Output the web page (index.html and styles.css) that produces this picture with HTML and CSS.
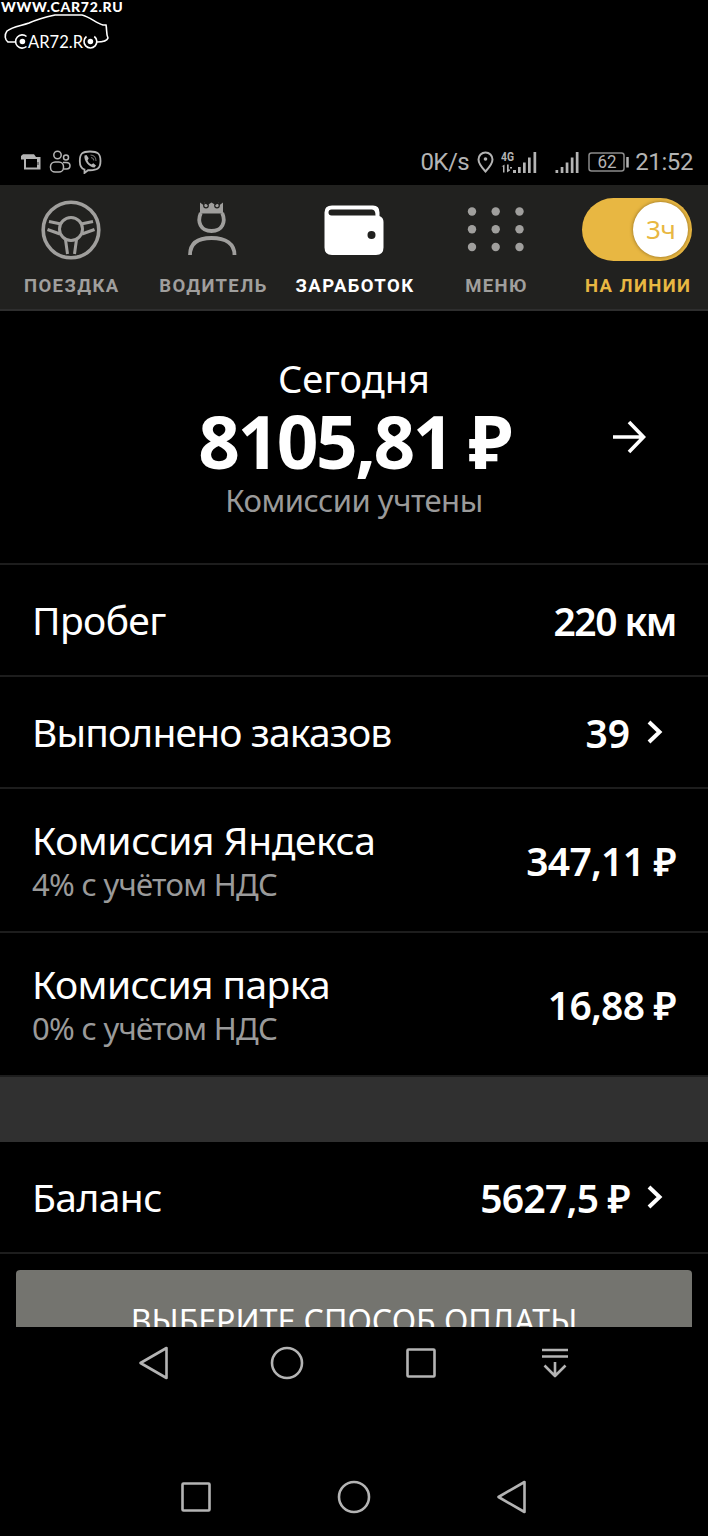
FILE: index.html
```html
<!DOCTYPE html>
<html lang="ru">
<head>
    <meta charset="UTF-8">
    <meta name="viewport" content="width=device-width, initial-scale=1.0">
    <title>Заработок</title>
    <link rel="stylesheet" href="styles.css">
</head>
<body>
    <div class="screen">
        <header class="site-logo">
            <span class="site-url">WWW.CAR72.RU</span>
            <svg class="site-car" width="112" height="38" viewBox="0 0 112 38" fill="none" stroke="#fff" stroke-width="1.6">
                <path d="M15 29H8C5 27 4 22 7 18C13 13 21 13 29 10C38 6 46 4 55 2H82C90 4 96 10 103 12H106C107 16 106 21 108 25C107 28 103 29 97 29"/>
                <path d="M26.500 23.500A6.600 6.600 0 1 0 26.500 33.500"/>
                <path d="M86.500 23.500A6.400 6.400 0 1 0 94.300 23.500"/>
                <circle cx="22.400" cy="28.500" r="2.800" fill="#fff" stroke="none"/>
                <circle cx="90.400" cy="28.500" r="2.800" fill="#fff" stroke="none"/>
                <text class="car-text" x="28" y="34.500" textLength="55" lengthAdjust="spacingAndGlyphs">AR72.R</text>
            </svg>
        </header>

        <!-- Status bar -->
        <div class="status-bar">
            <div class="status-left">
                <svg width="22" height="24" viewBox="0 0 22 24" fill="none" stroke="#b4b4b4">
                    <path d="M1 9.500V6L3 4.300H14L16 7H4V9.500Z" fill="#b4b4b4" stroke="none"/>
                    <path d="M5 8H19.500V18.500H5Z" stroke-width="2"/>
                    <path d="M17 8H20V19H17Z" fill="#b4b4b4" stroke="none"/>
                    <path d="M18 12V15" stroke="#333"/>
                </svg>
                <svg width="22" height="24" viewBox="0 0 22 24" fill="none" stroke="#b4b4b4" stroke-width="1.500">
                    <circle cx="8.500" cy="5" r="3.700"/>
                    <circle cx="17" cy="7.500" r="2.500"/>
                    <rect x="1.500" y="12" width="13" height="10" rx="4.600"/>
                    <path d="M14 12.500H17Q21 12.500 21 15.700T17.500 19H15"/>
                </svg>
                <svg width="24" height="24" viewBox="0 0 24 24" fill="none" stroke="#b4b4b4" stroke-width="1.800">
                    <path d="M12 1.500C4.500 1.500 1.800 3.500 1.800 11C1.800 16 3 18.500 6.500 19.500V23L10 20.200C19.500 20.700 22.500 18.500 22.500 11C22.500 3.500 19.500 1.500 12 1.500Z"/>
                    <path d="M6.500 5.500L8.500 5L10.700 8.200L9.500 10.500Q10.500 13.500 13.500 14.500L15.300 13.200L18 15.500L16.500 17.500C11 17.500 5.500 10.500 6.500 5.500Z" fill="#b4b4b4" stroke="none"/>
                    <path d="M12.500 5Q18 5.500 18 11M13 7.500Q15.600 8 15.800 10.500" stroke-width="1.100" opacity=".6"/>
                </svg>
            </div>
            <div class="status-right">
                <span class="speed">0K/s</span>
                <svg width="17" height="22" viewBox="0 0 17 22" fill="none" stroke="#b4b4b4" stroke-width="2">
                    <path d="M8.500 1.500A7 7 0 0 0 1.500 8.500C1.500 13 8.500 20.500 8.500 20.500S15.500 13 15.500 8.500A7 7 0 0 0 8.500 1.500Z"/>
                    <circle cx="8.500" cy="8" r="1.800" fill="#b4b4b4" stroke="none"/>
                </svg>
                <svg class="signal-4g" width="36" height="24" viewBox="0 0 36 24" fill="#b4b4b4">
                    <text class="net-text" x="0" y="10.500" textLength="13" lengthAdjust="spacingAndGlyphs">4G</text>
                    <path d="M.500 16.500L3.500 14.500V22.500H2V16.500ZM6 14.500V22.500L9 20.500V19.500H7.700V14.500ZM9 17H11V18.500H9Z"/>
                    <path d="M12 20h3v3h-3ZM17 17h2.700v6h-2.700ZM22 12.500h2.700v10.500h-2.700ZM27 7.500h2.700v15.500h-2.700ZM32.500 2h2.700v21h-2.700Z"/>
                </svg>
                <svg class="signal" width="24" height="24" viewBox="0 0 24 24" fill="#b4b4b4">
                    <path d="M.5 20h2.700v3h-2.700ZM5.700 17h2.700v6h-2.700ZM10.700 12.500h2.700v10.500h-2.700ZM15.800 7.500h2.700v15.500h-2.700ZM20.800 2h2.700v21h-2.700Z"/>
                </svg>
                <svg width="42" height="22" viewBox="0 0 42 22" fill="none" stroke="#8b8b8b" stroke-width="1.500">
                    <rect x="1" y="2" width="35" height="18" rx="2.500"/>
                    <path d="M39.500 6V16.500" stroke="#b4b4b4" stroke-width="2.500"/>
                    <text class="battery-text" x="9.500" y="17.200" textLength="19" lengthAdjust="spacingAndGlyphs">62</text>
                </svg>
                <span class="clock">21:52</span>
            </div>
        </div>

        <!-- Top tabs -->
        <nav class="tabs">
            <a class="tab">
                <svg width="60" height="60" viewBox="0 0 60 60" fill="none" stroke="#a09f9d" stroke-width="3">
                    <circle cx="30" cy="30" r="27.800" stroke-width="3.600"/>
                    <circle cx="30" cy="29" r="11.500"/>
                    <path d="M8 21.500L20 24M6.500 29.500L19 34M52 21.500L40 24M53.500 29.500L41 34M24.500 39.500L26.500 54M35.500 39.500L33.500 54"/>
                </svg>
                <span>ПОЕЗДКА</span>
            </a>
            <a class="tab">
                <svg width="60" height="60" viewBox="0 0 60 60" fill="none" stroke="#a09f9d" stroke-width="3.800">
                    <path d="M18.800 13C15 22 18.500 31 29.500 31S44 22 40.200 13"/>
                    <path d="M18 13.500V2.500L22 5.500V2.500L25.500 5L29.500 2.500L33.500 5L37 2.500V5.500L41 2.500V13.500Z" fill="#a09f9d" stroke="none"/>
                    <circle cx="24" cy="5.500" r="2.300" fill="none" stroke="#21211f" stroke-width="1.200"/>
                    <circle cx="35" cy="5.500" r="2.300" fill="none" stroke="#21211f" stroke-width="1.200"/>
                    <path d="M8 55C8 44 15 38 29.500 38S52.500 44 52.500 55"/>
                </svg>
                <span>ВОДИТЕЛЬ</span>
            </a>
            <a class="tab active">
                <svg width="60" height="60" viewBox="0 0 60 60">
                    <path fill="#fff" d="M8 5.500H49Q55.500 5.500 55.500 12.500V16Q59.500 17.500 59.500 22V47.500Q59.500 55 52 55H8Q.5 55 .5 47.500V12.500Q.5 5.500 8 5.500Z"/>
                    <path fill="#21211f" d="M7.500 9.500H48Q51.500 9.500 51.500 15.500H7.500Q4.500 15.500 4.500 12.500T7.500 9.500Z"/>
                    <circle cx="47.500" cy="35" r="4" fill="#21211f"/>
                </svg>
                <span>ЗАРАБОТОК</span>
            </a>
            <a class="tab">
                <svg width="60" height="60" viewBox="0 0 60 60" fill="#a09f9d">
                    <circle cx="6" cy="11.500" r="4.200"/><circle cx="29.700" cy="11.500" r="4.200"/><circle cx="53.500" cy="11.500" r="4.200"/>
                    <circle cx="6" cy="29.200" r="4.200"/><circle cx="29.700" cy="29.200" r="4.200"/><circle cx="53.500" cy="29.200" r="4.200"/>
                    <circle cx="6" cy="47" r="4.200"/><circle cx="29.700" cy="47" r="4.200"/><circle cx="53.500" cy="47" r="4.200"/>
                </svg>
                <span>МЕНЮ</span>
            </a>
            <a class="tab online">
                <div class="toggle"><div class="knob">3ч</div></div>
                <span>НА ЛИНИИ</span>
            </a>
        </nav>

        <main class="content">
            <section class="summary">
                <div class="summary-day">Сегодня</div>
                <div class="summary-sum">8105,81 ₽</div>
                <div class="summary-note">Комиссии учтены</div>
                <svg class="summary-arrow" width="34" height="34" viewBox="0 0 34 34" fill="none" stroke="#fff" stroke-width="3.600">
                    <path d="M1 17H31M17 2L31.500 17L17 32"/>
                </svg>
            </section>

            <div class="row">
                <div class="label">Пробег</div>
                <div class="value km">220 км</div>
            </div>
            <div class="row">
                <div class="label orders">Выполнено заказов</div>
                <div class="value count">39</div>
                <svg class="chevron" width="16" height="24" viewBox="0 0 16 24" fill="none" stroke="#fff" stroke-width="4"><path d="M2 2L12.500 12L2 22"/></svg>
            </div>
            <div class="row tall">
                <div>
                    <div class="label yandex">Комиссия Яндекса</div>
                    <div class="sub">4% с учётом НДС</div>
                </div>
                <div class="value">347,11 ₽</div>
            </div>
            <div class="row tall">
                <div>
                    <div class="label">Комиссия парка</div>
                    <div class="sub">0% с учётом НДС</div>
                </div>
                <div class="value">16,88 ₽</div>
            </div>
            <div class="divider"></div>
            <div class="row">
                <div class="label">Баланс</div>
                <div class="value">5627,5 ₽</div>
                <svg class="chevron" width="16" height="24" viewBox="0 0 16 24" fill="none" stroke="#fff" stroke-width="4"><path d="M2 2L12.500 12L2 22"/></svg>
            </div>
            <div class="pay">
                <button class="pay-button">ВЫБЕРИТЕ СПОСОБ ОПЛАТЫ</button>
            </div>
        </main>

        <!-- Navigation keys -->
        <div class="nav-keys">
            <svg width="34" height="36" viewBox="0 0 34 36"><path d="M30.500 3V33L4.500 18Z"/></svg>
            <svg width="34" height="36" viewBox="0 0 34 36"><circle cx="17" cy="18" r="15"/></svg>
            <svg width="34" height="36" viewBox="0 0 34 36"><rect x="3.500" y="4.500" width="27" height="27" rx="1"/></svg>
            <svg width="34" height="36" viewBox="0 0 34 36"><path d="M4 5H30M4 11.500H30M17 17V31M6.500 20.500L17 31L27.500 20.500"/></svg>
        </div>
        <div class="nav-keys bottom">
            <svg width="34" height="36" viewBox="0 0 34 36"><rect x="3.500" y="4.500" width="27" height="27" rx="1"/></svg>
            <svg width="34" height="36" viewBox="0 0 34 36"><circle cx="17" cy="18" r="15"/></svg>
            <svg width="34" height="36" viewBox="0 0 34 36"><path d="M30.500 3V33L4.500 18Z"/></svg>
        </div>
    </div>
</body>
</html>
```
FILE: styles.css
```css
* {
    box-sizing: border-box;
}

body {
    margin: 0;
    background-color: #000;
    color: #fff;
    font-family: 'Noto Sans', sans-serif;
}

svg {
    display: block;
    flex-shrink: 0;
}

.screen {
    width: 708px;
    height: 1536px;
    overflow: hidden;
    background-color: #000;
}

.site-logo {
    height: 140px;
}

.site-url {
    display: block;
    height: 13px;
    padding-left: 1px;
    font-family: 'Lato', sans-serif;
    font-size: 14px;
    font-weight: 900;
    line-height: 13px;
    letter-spacing: 0.7px;
}

.car-text {
    font-family: 'Lato', sans-serif;
    font-size: 17px;
    fill: #fff;
    stroke: none;
}

/* Status bar */
.status-bar {
    display: flex;
    justify-content: space-between;
    align-items: center;
    height: 45px;
    padding: 0 15px 1px 20px;
    color: #b4b4b4;
    font-family: 'Roboto', sans-serif;
    font-size: 24px;
}

.status-left,
.status-right {
    display: flex;
    align-items: center;
}

.status-left {
    gap: 7px;
}

.speed {
    margin-right: 8px;
    letter-spacing: -0.5px;
}

.signal-4g {
    margin-left: 7px;
}

.signal {
    margin: 0 9px 0 18px;
}

.clock {
    margin-left: 5px;
    letter-spacing: -0.4px;
}

.net-text {
    font-family: 'Roboto', sans-serif;
    font-size: 13px;
    font-weight: 700;
}

.battery-text {
    font-family: 'Roboto', sans-serif;
    font-size: 18px;
    fill: #b4b4b4;
    stroke: none;
}

/* Tabs */
.tabs {
    display: grid;
    grid-template-columns: repeat(5, 1fr);
    height: 126px;
    padding-top: 15px;
    background-color: #21211f;
    border-bottom: 2px solid #2e2e2e;
}

.tab {
    display: flex;
    flex-direction: column;
    align-items: center;
    color: #a09f9d;
    font-family: 'Roboto', sans-serif;
    font-size: 18.5px;
    font-weight: 700;
    letter-spacing: 1.4px;
    white-space: nowrap;
}

.tab svg {
    margin-bottom: 14px;
}

.tab span {
    padding-left: 2px;
    line-height: 24px;
}

.tab.active {
    color: #fff;
}

.tab.online {
    color: #e8b742;
}

.toggle {
    display: flex;
    justify-content: flex-end;
    width: 110px;
    height: 63px;
    margin: -2px 0 13px;
    padding: 4px;
    border-radius: 32px;
    background-color: #e8b742;
}

.knob {
    width: 55px;
    height: 55px;
    border-radius: 50%;
    background-color: #fff;
    box-shadow: 0 0 3px 1px rgba(120, 90, 30, 0.5);
    font-family: 'Noto Sans', sans-serif;
    font-size: 26px;
    font-weight: 400;
    line-height: 55px;
    letter-spacing: -0.5px;
    text-align: center;
}

/* Earnings */
.content {
    height: 1016px;
    overflow: hidden;
}

.summary {
    position: relative;
    height: 254px;
    padding-top: 42px;
    border-bottom: 2px solid #1d1d1d;
    text-align: center;
    white-space: nowrap;
}

.summary-day {
    font-size: 38px;
    line-height: 50px;
}

.summary-sum {
    font-size: 73px;
    font-weight: 700;
    line-height: 76px;
    letter-spacing: -2.5px;
}

.summary-note {
    color: #9a9a9a;
    font-size: 31px;
    line-height: 42px;
    letter-spacing: -0.5px;
}

.summary-arrow {
    position: absolute;
    top: 109px;
    right: 62px;
}

.row {
    display: flex;
    align-items: center;
    height: 112px;
    padding: 0 32px;
    border-bottom: 2px solid #1d1d1d;
    white-space: nowrap;
}

.row.tall {
    height: 144px;
}

.label {
    font-size: 39px;
    line-height: 48px;
    letter-spacing: -0.6px;
}

.label.orders {
    letter-spacing: -0.85px;
}

.label.yandex {
    letter-spacing: -0.45px;
}

.sub {
    color: #9a9a9a;
    font-size: 31px;
    line-height: 40px;
    letter-spacing: -0.7px;
}

.value {
    margin-left: auto;
    font-size: 39px;
    font-weight: 600;
    letter-spacing: -0.75px;
}

.value.km {
    letter-spacing: -1.5px;
}

.value.count {
    letter-spacing: 0;
}

.chevron {
    margin: 0 13px 0 17px;
}

.divider {
    height: 65px;
    background-color: #303030;
}

.pay {
    padding: 16px 16px 0;
}

.pay-button {
    display: block;
    width: 100%;
    height: 104px;
    padding: 0 0 4px;
    border: none;
    border-radius: 4px;
    background-color: #74746f;
    color: #fff;
    font-family: 'Noto Sans', sans-serif;
    font-size: 32px;
}

/* Navigation keys */
.nav-keys {
    display: flex;
    justify-content: space-between;
    height: 72px;
    padding: 18px 136px 0;
}

.nav-keys svg {
    fill: none;
    stroke: #b4b4b4;
    stroke-width: 2.6;
    stroke-linejoin: round;
}

.nav-keys.bottom {
    margin-top: 80px;
    height: 57px;
    padding: 0 180px 0 179px;
}
```
